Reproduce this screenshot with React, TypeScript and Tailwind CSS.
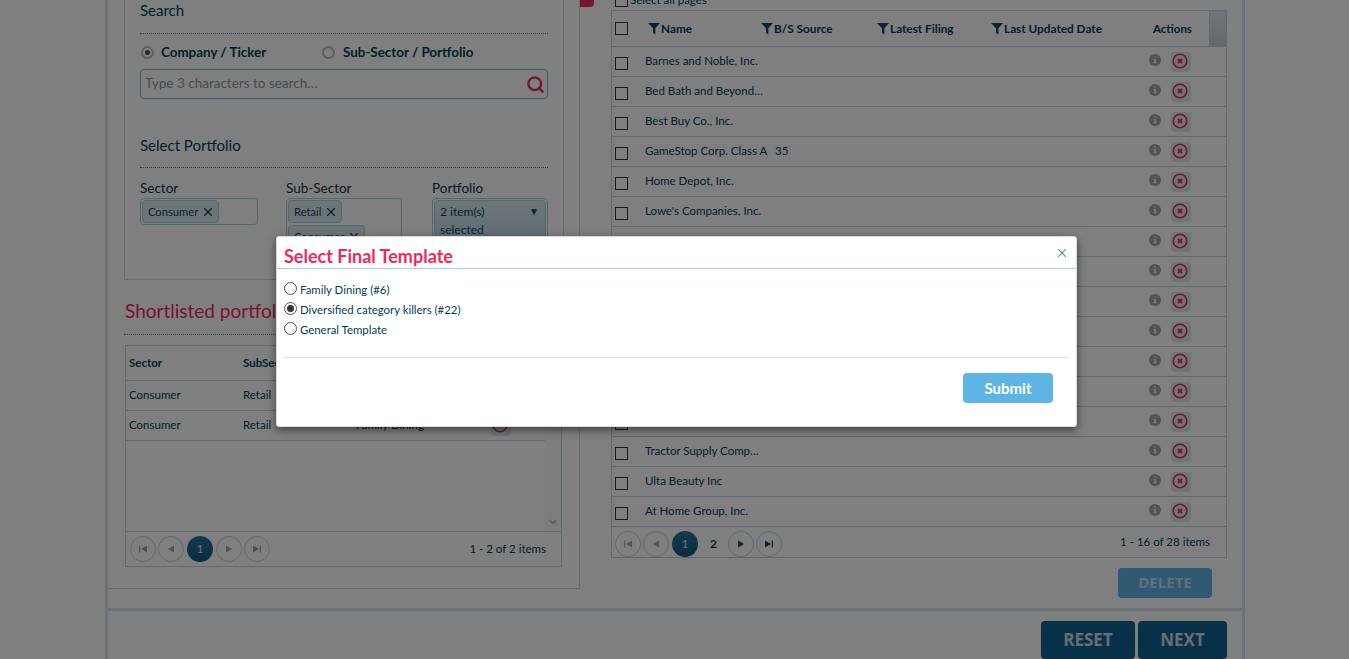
import { ChevronDown, Search, X } from "lucide-react";

const rows = [
  { name: "Barnes and Noble, Inc." },
  { name: "Bed Bath and Beyond…" },
  { name: "Best Buy Co., Inc." },
  { name: "GameStop Corp. Class A", value: "35" },
  { name: "Home Depot, Inc." },
  { name: "Lowe's Companies, Inc." },
  { name: "" },
  { name: "" },
  { name: "" },
  { name: "" },
  { name: "" },
  { name: "" },
  { name: "Dick's Sporting…" },
  { name: "Tractor Supply Comp…" },
  { name: "Ulta Beauty Inc" },
  { name: "At Home Group, Inc." },
];

function Filter() {
  return (
    <svg width="12" height="13" viewBox="0 0 12 13" className="shrink-0">
      <path d="M0 1h12L7.4 6.2V12.5L5 11V6.2z" fill="#0c4a66" />
    </svg>
  );
}

function Info() {
  return (
    <svg width="12" height="12" viewBox="0 0 12 12" className="shrink-0">
      <circle cx="6" cy="6" r="6" fill="#a4a4a4" />
      <path d="M5.2 2.4h1.6v1.4H5.2zM4.6 5h2.2v3.2h.8v1H4.5v-1h.9V6h-.8z" fill="#ffffff" />
    </svg>
  );
}

function CancelBtn() {
  return (
    <div className="flex h-5 w-5 shrink-0 items-center justify-center rounded bg-[#dcebf2]">
      <svg width="18" height="18" viewBox="0 0 18 18">
        <circle cx="8" cy="8" r="6.8" fill="none" stroke="#ee2a5a" strokeWidth="1.6" />
        <path d="M6 6l4 4M10 6l-4 4" stroke="#ee2a5a" strokeWidth="1.9" />
      </svg>
    </div>
  );
}

function Check() {
  return <div className="h-[13px] w-[13px] shrink-0 border border-[#333333] bg-white" />;
}

function Dotted() {
  return <div className="border-b border-dotted border-[#5d7a8a]" />;
}

function PageBtn({ kind, dim }: { kind: "first" | "prev" | "next" | "last"; dim?: boolean }) {
  const fill = dim ? "#8fa6b2" : "#0c4a66";
  return (
    <div className="flex h-[26px] w-[26px] items-center justify-center rounded-full border border-[#b9d3df]">
      <svg width="10" height="10" viewBox="0 0 10 10">
        {kind === "first" && <path d="M1 1.5h1.2v7H1zM9 1.5v7L3 5z" fill={fill} />}
        {kind === "prev" && <path d="M8 1.5v7L2 5z" fill={fill} />}
        {kind === "next" && <path d="M2 1.5v7L8 5z" fill={fill} />}
        {kind === "last" && <path d="M1 1.5v7L7 5zM7.8 1.5H9v7H7.8z" fill={fill} />}
      </svg>
    </div>
  );
}

function ActivePage() {
  return (
    <div className="flex h-[26px] w-[26px] items-center justify-center rounded-full bg-gradient-to-b from-[#217aa0] to-[#15587a] text-xs text-white/80">
      1
    </div>
  );
}

function Tag({ label }: { label: string }) {
  return (
    <div className="flex h-[23px] w-fit items-center gap-[3px] rounded border border-[#a8d0e2] bg-[#dcebf2] pt-[1px] pr-[3px] pl-[5px] text-[11.2px] text-[#0c4a66]">
      {label}
      <X size={14} strokeWidth={2} className="text-[#0c3a52]" />
    </div>
  );
}

function Radio({ on }: { on?: boolean }) {
  return (
    <div className="flex h-[13px] w-[13px] items-center justify-center rounded-full border-2 border-[#bdbdbd] bg-white">
      {on && <div className="h-[5px] w-[5px] rounded-full bg-[#555555]" />}
    </div>
  );
}

function ModalRadio({ label, on }: { label: string; on?: boolean }) {
  return (
    <div className="flex h-5 items-start">
      <div className="mt-[1px] flex h-[13px] w-[13px] shrink-0 items-center justify-center rounded-full border border-[#555555] bg-white">
        {on && <div className="h-[7px] w-[7px] rounded-full bg-[#333333]" />}
      </div>
      <span className="mt-[1px] ml-[3px] text-[11.4px] leading-[16px] text-[#003f57]">{label}</span>
    </div>
  );
}

export default function App() {
  return (
    <div className="relative h-[659px] w-[1349px] overflow-hidden bg-white font-['Lato','Liberation_Sans',sans-serif] text-[#003e5c]">
      <div className="ml-[105px] h-[659px] w-[1140px] border-x-[3px] border-x-[#d6e4ee]">
        <div className="flex h-[611px] border-b-[3px] border-b-[#d6e4ee]">
          {/* left column */}
          <div className="h-[589px] w-[472px] border-r border-b border-[#d4d4d4] pl-[16px]">
            <div className="h-[280px] w-[440px] border-r border-b border-l border-[#d4d4d4] px-[15px]">
              <div className="h-[33px] text-[15px] leading-[21px]">Search</div>
              <Dotted />
              <div className="mt-[11px] flex h-[14px] items-center text-[13.4px] font-bold">
                <div className="ml-[1px]"><Radio on /></div>
                <span className="ml-[7px] w-[161px]">Company / Ticker</span>
                <Radio />
                <span className="ml-[8px]">Sub-Sector / Portfolio</span>
              </div>
              <div className="mt-[10px] flex h-[30px] items-center justify-between rounded border border-[#7fb6cf] pr-[2px] pb-[2px] pl-[4px] text-[13.5px] text-[#8b9aa3]">
                Type 3 characters to search…
                <Search size={19} strokeWidth={3} className="mt-[2px] text-[#ee2a5a]" />
              </div>
              <div className="mt-[36px] h-[32px] text-[15px] leading-[21px]">Select Portfolio</div>
              <Dotted />
              <div className="mt-[11px] flex text-[13.5px] text-[#17303e]">
                <div className="w-[146px]">
                  <div className="h-[19px] leading-[19px]">Sector</div>
                  <div className="h-[27px] w-[118px] rounded border border-[#a8d0e2] p-[1px]">
                    <Tag label="Consumer" />
                  </div>
                </div>
                <div className="w-[146px]">
                  <div className="h-[19px] leading-[19px]">Sub-Sector</div>
                  <div className="h-[60px] w-[116px] rounded border border-[#a8d0e2] p-[1px]">
                    <Tag label="Retail" />
                    <div className="mt-[2px]"><Tag label="Consumer" /></div>
                  </div>
                </div>
                <div className="w-[116px]">
                  <div className="h-[19px] leading-[19px]">Portfolio</div>
                  <div className="h-[60px] rounded border border-[#a8d0e2] p-[1px]">
                    <div className="flex h-[52px] justify-between rounded border border-[#a8d0e2] bg-gradient-to-b from-[#dcebf2] to-[#b3d2e0] px-[5px] text-xs leading-[18px] text-[#0c4a66]">
                      <span className="w-[70px] pt-[2px]">2 item(s) selected</span>
                      <span className="pt-[1px] pr-[1px] text-[10px]">▼</span>
                    </div>
                  </div>
                </div>
              </div>
            </div>
            <div className="mt-[7px] ml-[1px] flex h-[47px] w-[421px] items-center pt-[1px] text-[19px] text-[#ee2a5a]">
              Shortlisted portfolios
            </div>
            <div className="mb-[10px] w-[422px]"><Dotted /></div>
            <div className="ml-[1px] flex h-[222px] w-[437px] flex-col border border-[#bcd6e6]">
              <div className="flex min-h-0 flex-1">
                <div className="w-[420px] text-[11.5px]">
                  <div className="flex h-[35px] items-center border-b border-[#bcd6e6] font-bold">
                    <span className="w-[117px] pl-[3px]">Sector</span>
                    <span className="w-[113px]">SubSector</span>
                    <span>Portfolio</span>
                  </div>
                  {["Family Dining", "Family Dining"].map((p, i) => (
                    <div key={i} className="flex h-[30px] items-center border-b border-[#bcd6e6]">
                      <span className="mb-[1px] w-[117px] pl-[3px]">Consumer</span>
                      <span className="mb-[1px] w-[113px]">Retail</span>
                      <span className="mb-[1px] w-[135px]">{p}</span>
                      <CancelBtn />
                    </div>
                  ))}
                </div>
                <div className="flex w-[16px] items-end justify-center bg-[#fbfbfb] pb-[3px]">
                  <ChevronDown size={12} strokeWidth={3} className="text-[#b5b5b5]" />
                </div>
              </div>
              <div className="flex h-[35px] items-center justify-between border-t border-[#bcd6e6] pr-[15px] pl-[4px]">
                <div className="flex items-center gap-[2px]">
                  <PageBtn kind="first" dim />
                  <PageBtn kind="prev" dim />
                  <div className="mx-[1px]"><ActivePage /></div>
                  <PageBtn kind="next" dim />
                  <PageBtn kind="last" dim />
                </div>
                <span className="mb-[1px] text-[11.5px]">1 - 2 of 2 items</span>
              </div>
            </div>
          </div>

          {/* right column */}
          <div className="relative w-[660px]">
            <div className="absolute top-0 left-0 h-[7px] w-[14px] rounded-br-[4px] bg-[#ee2a5a]" />
            <div className="mt-[-10px] ml-[35px] flex h-[20px] items-center gap-[2px] text-[11.5px]">
              <Check />
              Select all pages
            </div>
            <div className="ml-[31px] w-[616px] border border-[#bcd6e6]">
              <div className="flex h-[36px] items-center border-b border-[#bcd6e6] text-[11.8px] font-bold">
                <div className="w-[33px] pl-[3px]"><Check /></div>
                {[
                  { t: "Name", w: "w-[113px]" },
                  { t: "B/S Source", w: "w-[116px]" },
                  { t: "Latest Filing", w: "w-[114px]" },
                  { t: "Last Updated Date", w: "w-[160px]" },
                ].map((c) => (
                  <div key={c.t} className={`flex items-center gap-[1px] pl-[3px] ${c.w}`}>
                    <Filter />
                    {c.t}
                  </div>
                ))}
                <span className="ml-[5px] w-[56px] text-[11.5px]">Actions</span>
                <div className="h-[35px] flex-1 border-l border-[#bcd6e6] bg-gradient-to-b from-[#e0e9ef] to-[#c3d2dc]" />
              </div>
              {rows.map((r, i) => (
                <div key={i} className="flex h-[30px] items-center border-b border-[#bcd6e6] text-[11.5px]">
                  <div className="mt-[3px] w-[33px] pl-[3px]"><Check /></div>
                  <span className="mb-[1px] w-[130px]">{r.name}</span>
                  <span className="mb-[1px] flex-1">{r.value}</span>
                  <div className="mb-[3px]"><Info /></div>
                  <div className="mr-[35px] ml-[10px]"><CancelBtn /></div>
                </div>
              ))}
              <div className="flex h-[30px] items-center justify-between pr-[16px] pl-[3px]">
                <div className="mt-[3px] flex items-center gap-[2px]">
                  <PageBtn kind="first" dim />
                  <PageBtn kind="prev" dim />
                  <div className="mx-[1px]"><ActivePage /></div>
                  <span className="w-[25px] text-center text-xs font-bold">2</span>
                  <PageBtn kind="next" />
                  <PageBtn kind="last" />
                </div>
                <span className="text-[11.5px]">1 - 16 of 28 items</span>
              </div>
            </div>
            <div className="mt-[10px] ml-[538px] flex h-[30px] w-[94px] items-center justify-center rounded bg-[#5eb5e3] pb-[2px] font-['Open_Sans',sans-serif] text-[15px] font-bold text-white/60">
              DELETE
            </div>
          </div>
        </div>

        {/* bottom bar */}
        <div className="mt-[10px] flex justify-end gap-[3px] pr-[15px] font-['Open_Sans',sans-serif] text-[17px] font-bold text-white/80">
          <div className="flex h-[38px] w-[94px] items-center justify-center rounded bg-[#0f6092]">RESET</div>
          <div className="flex h-[38px] w-[89px] items-center justify-center rounded bg-[#0f6092]">NEXT</div>
        </div>
      </div>

      {/* overlay */}
      <div className="absolute inset-0 bg-black/50" />

      {/* modal */}
      <div className="absolute top-[236px] left-[276px] h-[191px] w-[801px] rounded-[3px] border border-[#dddddd] bg-white px-[7px] shadow-[0_3px_9px_rgba(0,0,0,0.5)]">
        <div className="-mx-[7px] flex h-[32px] items-start justify-between border-b border-[#a3d5ea] px-[7px] pt-[7px]">
          <span className="text-[18px] leading-[24px] font-bold text-[#ee2a5a]">Select Final Template</span>
          <X size={14} strokeWidth={1.8} className="mt-[2px] text-[#3f7f96]" />
        </div>
        <div className="mt-[12px] mr-[1px] h-[77px] border-b border-[#e5e5e5]">
          <ModalRadio label="Family Dining (#6)" />
          <ModalRadio label="Diversified category killers (#22)" on />
          <ModalRadio label="General Template" />
        </div>
        <div className="mt-[15px] mr-[16px] ml-auto flex h-[30px] w-[90px] items-center justify-center rounded bg-[#5eb5e3] text-[15px] font-bold text-white">
          Submit
        </div>
      </div>
    </div>
  );
}
